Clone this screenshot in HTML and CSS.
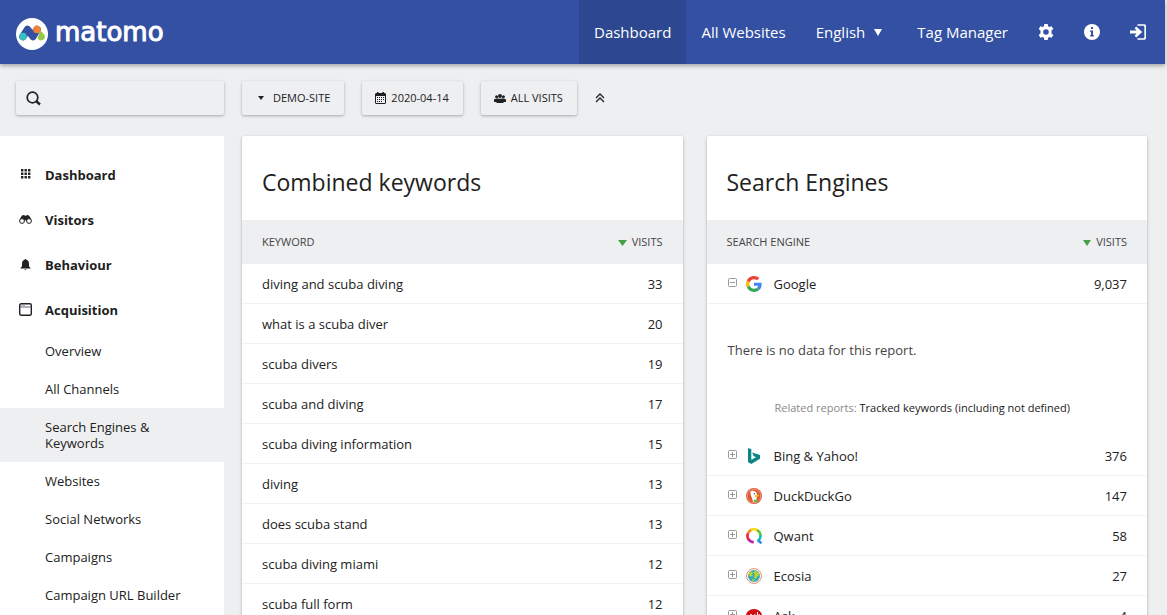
FILE: index.html
```html
<!DOCTYPE html>
<html lang="en">
<head>
  <meta charset="UTF-8">
  <meta name="viewport" content="width=device-width, initial-scale=1.0">
  <title>Search Engines &amp; Keywords - Matomo</title>
  <link rel="stylesheet" href="styles.css">
</head>
<body>
  <header class="topbar">
    <a class="brand" href="#">
      <svg class="brand-mark" viewBox="0 0 32 32" width="32" height="32">
        <circle cx="16" cy="16" r="16" fill="#fff"/>
        <path d="M7 18.500L11.500 11.500L17 18.500L21 11.500" fill="none" stroke="#3450a3" stroke-width="7.500" stroke-linecap="round" stroke-linejoin="round"/>
        <path d="M21.500 20L24.500 12.500L28.500 17A3.800 3.800 0 1 1 21.500 20z" fill="#95c748"/>
        <circle cx="7" cy="18.500" r="3.800" fill="#35bfc0"/>
        <circle cx="21" cy="11.500" r="3.800" fill="#f38334"/>
      </svg>
      <span class="brand-name">matomo</span>
    </a>
    <nav class="topnav">
      <a class="active" href="#">Dashboard</a>
      <a href="#">All Websites</a>
      <a class="language" href="#">English <svg width="8" height="7" viewBox="0 0 8 7"><path d="M0 0h8L4 7z" fill="#fff"/></svg></a>
      <a href="#">Tag Manager</a>
      <a href="#" aria-label="Administration">
        <svg width="16" height="16" viewBox="0 0 16 16"><path fill="#fff" fill-rule="evenodd" d="M6.300 0h3.400l.4 2.200 1.300.8 2.200-.8 1.700 2.900-1.800 1.500v2.800l1.800 1.500-1.700 2.900-2.200-.8-1.300.8-.4 2.200H6.300l-.4-2.200-1.300-.8-2.200.8L.7 10.900l1.800-1.500V6.600L.7 5.100l1.700-2.900 2.200.8 1.300-.8zM8 5.200a2.800 2.800 0 1 0 0 5.600 2.800 2.800 0 0 0 0-5.600z"/></svg>
      </a>
      <a href="#" aria-label="Help">
        <svg width="16" height="16" viewBox="0 0 16 16"><circle cx="8" cy="8" r="8" fill="#fff"/><path d="M7 3h2v2H7zM6.200 6.500H9V11h.8v1.500H6.200V11H7V8h-.8z" fill="#3450a3"/></svg>
      </a>
      <a href="#" aria-label="Sign out">
        <svg width="16" height="16" viewBox="0 0 16 16"><path d="M7.500 1H14a1.200 1.200 0 0 1 1.200 1.200v11.600A1.200 1.200 0 0 1 14 15H7.500" fill="none" stroke="#fff" stroke-width="1.700"/><path d="M0 6.500h6.500L4.700 4.200 6.300 2.500 12.200 8 6.300 13.500 4.700 11.800 6.500 9.500H0z" fill="#fff"/></svg>
      </a>
    </nav>
  </header>

  <div class="toolbar">
    <label class="search">
      <svg width="16" height="16" viewBox="0 0 16 16"><circle cx="6.500" cy="7.500" r="5.300" fill="none" stroke="#212121" stroke-width="1.700"/><path d="M10 11l4 3.500" stroke="#212121" stroke-width="2.400"/></svg>
      <input type="text" aria-label="Search">
    </label>
    <button class="selector site" type="button">
      <svg width="6" height="4" viewBox="0 0 6 4"><path d="M0 0h6L3 4z"/></svg>
      DEMO-SITE
    </button>
    <button class="selector" type="button">
      <svg width="11" height="12" viewBox="0 0 11 12"><path fill-rule="evenodd" d="M2 0h1.500v1h4V0H9v1h1l1 1v9l-1 1H1l-1-1V2l1-1h1zM1 4v6.900h9V4z"/><path d="M2 5h1v1H2zM4 5h1v1H4zM6 5h1v1H6zM8 5h1v1H8zM2 7h1v1H2zM4 7h1v1H4zM6 7h1v1H6zM8 7h1v1H8zM2 9h1v1H2zM4 9h1v1H4zM6 9h1v1H6z"/></svg>
      2020-04-14
    </button>
    <button class="selector" type="button">
      <svg width="12" height="9" viewBox="0 0 12 9"><circle cx="2.600" cy="2.800" r="1.500"/><circle cx="9.400" cy="2.800" r="1.500"/><circle cx="6" cy="2" r="2"/><path d="M0 8V6q0-1.500 3-1.500l3 .2 3-.2q3 0 3 1.500v2H9.500v1h-7V8z"/></svg>
      ALL VISITS
    </button>
    <button class="collapse" type="button" aria-label="Collapse">
      <svg width="10" height="10" viewBox="0 0 10 10"><path d="M1 5l4-4 4 4M1 9l4-4 4 4" fill="none" stroke="#212121" stroke-width="1.300"/></svg>
    </button>
  </div>

  <div class="page">
    <nav class="sidebar">
      <a class="category" href="#">
        <svg width="13" height="13" viewBox="0 0 13 13"><path d="M2 1h2.400v2.400H2zM5.500 1h2.400v2.400H5.500zM9 1h2.400v2.400H9zM2 4.500h2.400v2.400H2zM5.500 4.500h2.400v2.400H5.500zM9 4.500h2.400v2.400H9zM2 8h2.400v2.400H2zM5.500 8h2.400v2.400H5.500zM9 8h2.400v2.400H9z"/></svg>
        Dashboard
      </a>
      <a class="category" href="#">
        <svg width="13" height="13" viewBox="0 0 13 13"><path d="M3 2.500L5 2l1.500 1L8 2l2 .5 2.500 4-4 2-2-1.500-2 1.500-4-2z"/><circle cx="3" cy="8" r="2.400" fill="#fff" stroke="#212121"/><circle cx="10" cy="8" r="2.400" fill="#fff" stroke="#212121"/></svg>
        Visitors
      </a>
      <a class="category" href="#">
        <svg width="13" height="13" viewBox="0 0 13 13"><path d="M5.800 1h1.400v.8Q10 2.300 10 6v2.200L11.500 10v.5h-10V10L3 8.200V6q0-3.700 2.800-4.200zM5.300 11.200h2.400L6.500 12.200z"/></svg>
        Behaviour
      </a>
      <a class="category" href="#">
        <svg width="13" height="13" viewBox="0 0 13 13"><rect x=".7" y=".7" width="11.600" height="11.600" rx="1.500" fill="#fff" stroke="#212121" stroke-width="1.400"/><path d="M1 4h11M2.500 2.400h1M4.500 2.400h1" stroke="#667" fill="none"/></svg>
        Acquisition
      </a>
      <a class="report" href="#">Overview</a>
      <a class="report" href="#">All Channels</a>
      <a class="report active" href="#">Search Engines &amp; Keywords</a>
      <a class="report" href="#">Websites</a>
      <a class="report" href="#">Social Networks</a>
      <a class="report" href="#">Campaigns</a>
      <a class="report" href="#">Campaign URL Builder</a>
    </nav>

    <main class="reports">
      <section class="card">
        <h2>Combined keywords</h2>
        <table>
          <thead>
            <tr><th>KEYWORD</th><th class="num"><svg width="9" height="6" viewBox="0 0 9 6"><path d="M0 0h9L4.500 6z" fill="#43a047"/></svg>VISITS</th></tr>
          </thead>
          <tbody>
            <tr><td>diving and scuba diving</td><td class="num">33</td></tr>
            <tr><td>what is a scuba diver</td><td class="num">20</td></tr>
            <tr><td>scuba divers</td><td class="num">19</td></tr>
            <tr><td>scuba and diving</td><td class="num">17</td></tr>
            <tr><td>scuba diving information</td><td class="num">15</td></tr>
            <tr><td>diving</td><td class="num">13</td></tr>
            <tr><td>does scuba stand</td><td class="num">13</td></tr>
            <tr><td>scuba diving miami</td><td class="num">12</td></tr>
            <tr><td>scuba full form</td><td class="num">12</td></tr>
          </tbody>
        </table>
      </section>

      <section class="card">
        <h2>Search Engines</h2>
        <table>
          <thead>
            <tr><th>SEARCH ENGINE</th><th class="num"><svg width="8" height="6" viewBox="0 0 8 6"><path d="M0 0h8L4 6z" fill="#43a047"/></svg>VISITS</th></tr>
          </thead>
          <tbody>
            <tr>
              <td><div class="engine">
                <button class="toggle" type="button" aria-label="Collapse Google"><svg width="9" height="9" viewBox="0 0 9 9"><rect x=".5" y=".5" width="8" height="8" rx="1"/><path d="M2 4.500h5"/></svg></button>
                <svg width="16" height="16" viewBox="0 0 48 48"><path fill="#ea4335" d="M24 9.500c3.540 0 6.710 1.220 9.210 3.600l6.850-6.850C35.900 2.380 30.470 0 24 0 14.620 0 6.510 5.380 2.560 13.220l7.980 6.190C12.430 13.720 17.740 9.500 24 9.500z"/><path fill="#4285f4" d="M46.980 24.550c0-1.570-.15-3.090-.38-4.550H24v9.020h12.940c-.58 2.960-2.260 5.480-4.780 7.180l7.730 6c4.510-4.180 7.090-10.360 7.090-17.650z"/><path fill="#fbbc05" d="M10.530 28.590c-.48-1.450-.76-2.990-.76-4.590s.27-3.140.76-4.590l-7.980-6.190C.92 16.460 0 20.120 0 24s.92 7.540 2.560 10.780l7.970-6.190z"/><path fill="#34a853" d="M24 48c6.480 0 11.930-2.130 15.890-5.810l-7.730-6c-2.150 1.450-4.920 2.300-8.160 2.300-6.260 0-11.570-4.220-13.470-9.910l-7.980 6.190C6.510 42.620 14.620 48 24 48z"/></svg>
                Google
              </div></td>
              <td class="num">9,037</td>
            </tr>
            <tr class="subtable">
              <td colspan="2">
                <p class="no-data">There is no data for this report.</p>
                <p class="related">Related reports: <a href="#">Tracked keywords (including not defined)</a></p>
              </td>
            </tr>
            <tr>
              <td><div class="engine">
                <button class="toggle" type="button" aria-label="Expand Bing &amp; Yahoo!"><svg width="9" height="9" viewBox="0 0 9 9"><rect x=".5" y=".5" width="8" height="8" rx="1"/><path d="M2 4.500h5M4.500 2v5"/></svg></button>
                <svg width="16" height="16" viewBox="0 0 16 16"><path d="M2 0l3.300 1.200v10.600L10 9.200 7.600 8 6.200 4.400 14 7v3.700L5.300 16 2 14z" fill="#0c8484"/></svg>
                Bing &amp; Yahoo!
              </div></td>
              <td class="num">376</td>
            </tr>
            <tr>
              <td><div class="engine">
                <button class="toggle" type="button" aria-label="Expand DuckDuckGo"><svg width="9" height="9" viewBox="0 0 9 9"><rect x=".5" y=".5" width="8" height="8" rx="1"/><path d="M2 4.500h5M4.500 2v5"/></svg></button>
                <svg width="16" height="16" viewBox="0 0 16 16"><circle cx="8" cy="8" r="8" fill="#de5833"/><circle cx="8" cy="8" r="6.800" fill="none" stroke="#f2a58f" stroke-width=".8"/><path d="M4.500 3.500Q6 2.200 8 3q3 .8 3 4.200l-.2 2.300-.5 4-3 .8L5.500 9Q4 6 4.500 3.500z" fill="#fff"/><circle cx="8.300" cy="5.700" r=".7" fill="#2d4f8e"/><path d="M9 7.200l4-.4v1.400l-3.600 1z" fill="#fdb913"/><path d="M7.500 11.800l4.500 0-.5 2-3.500.2z" fill="#5bb947"/></svg>
                DuckDuckGo
              </div></td>
              <td class="num">147</td>
            </tr>
            <tr>
              <td><div class="engine">
                <button class="toggle" type="button" aria-label="Expand Qwant"><svg width="9" height="9" viewBox="0 0 9 9"><rect x=".5" y=".5" width="8" height="8" rx="1"/><path d="M2 4.500h5M4.500 2v5"/></svg></button>
                <svg width="16" height="16" viewBox="0 0 16 16"><g fill="none" stroke-width="2.600"><path d="M7.800 14.300Q4.300 14 2.500 11.200" stroke="#c322a5"/><path d="M2.700 11.900Q.4 8.300 2.200 5" stroke="#f0203e"/><path d="M2 5.400Q3 2.800 5.500 1.700" stroke="#fb8c1c"/><path d="M5 1.900Q8.500.4 11.500 2.300" stroke="#f3dc12"/><path d="M11 2Q14.300 4 14.600 7.500" stroke="#63c92b"/><path d="M14.500 7Q14.800 10.300 12.300 12.500" stroke="#14b8bd"/><path d="M11.500 12L15.500 15.200" stroke="#258fe8"/></g></svg>
                Qwant
              </div></td>
              <td class="num">58</td>
            </tr>
            <tr>
              <td><div class="engine">
                <button class="toggle" type="button" aria-label="Expand Ecosia"><svg width="9" height="9" viewBox="0 0 9 9"><rect x=".5" y=".5" width="8" height="8" rx="1"/><path d="M2 4.500h5M4.500 2v5"/></svg></button>
                <svg width="16" height="16" viewBox="0 0 16 16"><circle cx="8" cy="8" r="7.400" fill="#fff" stroke="#e58a6c"/><circle cx="8" cy="8" r="6" fill="#36acb8"/><path d="M3 5l2.500-1.500L7 4.500 6 6.500l1 1.500-2 .5L2.500 7zM8.500 2.500l3.500 1.700 1.500 3-2 1-1.300 2.500-1.700-.4-.5-2.500 1-1.500-1.500-1.500zM6.500 11l2.300.6-.8 1.700-2-.7z" fill="#b8d431"/></svg>
                Ecosia
              </div></td>
              <td class="num">27</td>
            </tr>
            <tr>
              <td><div class="engine">
                <button class="toggle" type="button" aria-label="Expand Ask"><svg width="9" height="9" viewBox="0 0 9 9"><rect x=".5" y=".5" width="8" height="8" rx="1"/><path d="M2 4.500h5M4.500 2v5"/></svg></button>
                <svg width="16" height="16" viewBox="0 0 16 16"><ellipse cx="8" cy="8" rx="8" ry="7" fill="#cf0a10"/><path d="M3.500 10L5 6l1.500 4M8 9.500h1.500L8.200 7l1.300-1M11.500 4v6M13.500 6l-1.500 2 1.500 2" fill="none" stroke="#fff"/></svg>
                Ask
              </div></td>
              <td class="num">4</td>
            </tr>
          </tbody>
        </table>
      </section>
    </main>
  </div>
</body>
</html>
```
FILE: styles.css
```css
* {
  box-sizing: border-box;
}
body {
  margin: 0;
  height: 100vh;
  overflow: hidden;
  background: #eeeff1;
  color: #212121;
  font-family: "Segoe UI", "Open Sans", "Noto Sans", sans-serif;
  font-size: 13px;
  line-height: 16px;
}
a {
  color: inherit;
  text-decoration: none;
}
button {
  font: inherit;
  color: inherit;
  background: none;
  border: 0;
  padding: 0;
  cursor: pointer;
}
svg {
  flex: none;
}

/* Top bar */
.topbar {
  display: flex;
  justify-content: space-between;
  height: 64px;
  margin-right: 2px;
  padding: 0 4px 0 16px;
  background: #3450a3;
  color: #fff;
  box-shadow: 0 2px 4px rgba(0, 0, 0, 0.3);
}
.brand {
  display: flex;
  align-items: center;
  gap: 7px;
  padding-top: 4px;
}
.brand-name {
  font-family: "DejaVu Sans", sans-serif;
  font-size: 26px;
  line-height: 32px;
  padding-bottom: 4px;
  -webkit-text-stroke: 1px #fff;
}
.topnav {
  display: flex;
}
.topnav a {
  display: flex;
  align-items: center;
  padding: 0 15px;
  font-size: 15px;
}
.topnav .active {
  background: #2d4790;
}
.topnav .language {
  gap: 9px;
  padding-right: 20px;
}

/* Search box and selectors */
.toolbar {
  display: flex;
  align-items: center;
  gap: 18px;
  padding: 17px 16px 21px;
}
.search,
.selector {
  display: flex;
  align-items: center;
  height: 34px;
  border-radius: 2px;
  background: #eeeff1;
  box-shadow: 0 1px 3px rgba(0, 0, 0, 0.3);
}
.search {
  width: 208px;
  padding: 0 10px;
}
.search input {
  flex: 1;
  min-width: 0;
  border: 0;
  outline: 0;
  background: none;
  font: inherit;
}
.selector {
  gap: 5px;
  padding: 0 14px 0 13px;
  font-size: 11px;
  fill: #212121;
}
.site {
  gap: 9px;
  padding-left: 16px;
}
.collapse {
  display: flex;
}

/* Left menu */
.page {
  display: flex;
  align-items: stretch;
}
.sidebar {
  flex: none;
  width: 224px;
  padding: 16px 0 24px;
  background: #fff;
}
.category {
  display: flex;
  align-items: center;
  gap: 13px;
  height: 45px;
  padding-left: 19px;
  font-weight: bold;
  fill: #212121;
}
.report {
  display: block;
  padding: 11px 60px 11px 45px;
}
.sidebar .report:last-child {
  padding-right: 16px;
}
.report.active {
  background: #eeeff1;
}

/* Report cards */
.reports {
  flex: 1;
  display: flex;
  align-items: flex-start;
  gap: 24px;
  padding: 0 20px 0 18px;
}
.card {
  flex: 1;
  min-width: 0;
  border-radius: 2px;
  background: #fff;
  box-shadow: 0 1px 3px rgba(0, 0, 0, 0.3);
}
.card h2 {
  margin: 0;
  padding: 30px 20px 22px;
  font-size: 23px;
  line-height: 32px;
  font-weight: normal;
}
table {
  width: 100%;
  border-spacing: 0;
}
th {
  height: 44px;
  padding: 0 20px;
  background: #eeeff1;
  color: #444;
  font-size: 11px;
  font-weight: normal;
  text-align: left;
}
th svg {
  margin-right: 5px;
}
td {
  height: 40px;
  padding: 1px 20px 0;
  border-bottom: 1px solid #f2f2f2;
}
.num {
  text-align: right;
}
.engine {
  display: flex;
  align-items: center;
  gap: 12px;
}
.toggle {
  display: flex;
  margin: 0 -3px 3px 1px;
}
.toggle svg {
  fill: #fff;
  stroke: #999;
}
.subtable td {
  padding: 36px 20px 18px;
  border: 0;
}
.no-data {
  margin: 0 0 38px;
  padding-left: 1px;
  color: #444;
  line-height: 20px;
}
.related {
  margin: 0;
  padding-left: 48px;
  color: #888;
  font-size: 11px;
  line-height: 20px;
}
.related a {
  color: #212121;
}
```
